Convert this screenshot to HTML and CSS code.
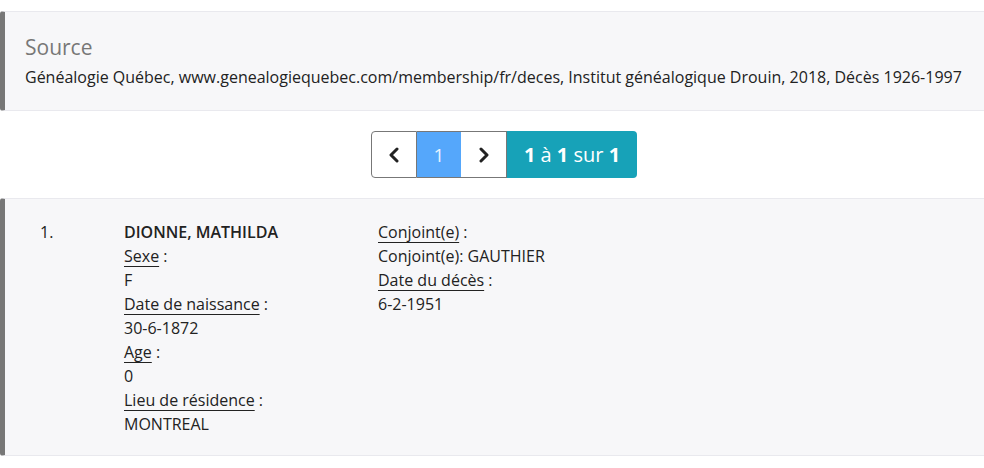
FILE: index.html
```html
<!DOCTYPE html>
<html lang="fr">
<head>
<meta charset="utf-8">
<title>Source</title>
<link rel="stylesheet" href="styles.css">
</head>
<body>
<section class="source">
  <h4 class="source-title">Source</h4>
  <p class="source-text">Généalogie Québec, www.genealogiequebec.com/membership/fr/deces, Institut généalogique Drouin, 2018, Décès 1926-1997</p>
</section>

<nav class="pager-wrap">
  <div class="pager">
    <a class="pg-btn pg-arrow" href="#" aria-label="Précédent">
      <svg width="14" height="16" viewBox="0 0 14 16"><path d="M10 2 L4 8 L10 14" fill="none" stroke="#222" stroke-width="3" stroke-linecap="round" stroke-linejoin="round"/></svg>
    </a>
    <span class="pg-btn pg-current">1</span>
    <a class="pg-btn pg-arrow pg-next" href="#" aria-label="Suivant">
      <svg width="14" height="16" viewBox="0 0 14 16"><path d="M4 2 L10 8 L4 14" fill="none" stroke="#222" stroke-width="3" stroke-linecap="round" stroke-linejoin="round"/></svg>
    </a>
    <span class="pg-info"><b>1</b>&nbsp;à&nbsp;<b>1</b>&nbsp;sur&nbsp;<b>1</b></span>
  </div>
</nav>

<section class="record">
  <div class="rec-num">1.</div>
  <div class="rec-col">
    <div class="rec-name">DIONNE, MATHILDA</div>
    <div><span class="lbl">Sexe</span> :</div>
    <div>F</div>
    <div><span class="lbl">Date de naissance</span> :</div>
    <div>30-6-1872</div>
    <div><span class="lbl">Age</span> :</div>
    <div>0</div>
    <div><span class="lbl">Lieu de résidence</span> :</div>
    <div>MONTREAL</div>
  </div>
  <div class="rec-col">
    <div><span class="lbl">Conjoint(e)</span> :</div>
    <div>Conjoint(e): GAUTHIER</div>
    <div><span class="lbl">Date du décès</span> :</div>
    <div>6-2-1951</div>
  </div>
</section>
</body>
</html>
```

FILE: styles.css
```css
html, body {
  margin: 0;
  padding: 0;
  background: #fff;
}
body {
  font-family: "Open Sans", "Liberation Sans", sans-serif;
  font-size: 16px;
  line-height: 24px;
  color: #222;
}
.source {
  margin-top: 11px;
  background: #f7f7f9;
  border-top: 1px solid #e9e9ee;
  border-bottom: 1px solid #e9e9ee;
  border-left: 5px solid #777;
  border-radius: 3px 0 0 3px;
  padding: 23px 20px 21px 20px;
}
.source-title {
  margin: 0 0 6px 0;
  font-size: 21px;
  font-weight: 400;
  line-height: 24px;
  color: #777;
}
.source-text {
  margin: 0;
}
.pager-wrap {
  display: flex;
  justify-content: center;
  padding-left: 24px;
  margin-top: 20px;
}
.pager {
  display: flex;
  height: 47px;
}
.pg-btn {
  display: flex;
  align-items: center;
  justify-content: center;
  box-sizing: border-box;
  height: 47px;
  text-decoration: none;
}
.pg-arrow {
  width: 46px;
  background: #fff;
  border: 1px solid #777;
}
.pg-arrow:first-child {
  border-radius: 4px 0 0 4px;
}
.pg-next {
  border-left: none;
}
.pg-current {
  width: 44px;
  background: #55a7fb;
  color: #e8f3ff;
  font-size: 19px;
  border-top: 1px solid #777;
  border-bottom: 1px solid #777;
}
.pg-info {
  display: flex;
  align-items: center;
  justify-content: center;
  width: 130px;
  height: 47px;
  background: #17a2b8;
  color: #fff;
  font-size: 20px;
  border-radius: 0 4px 4px 0;
}
.pg-info b {
  font-weight: 700;
}
.record {
  margin-top: 20px;
  background: #f7f7f9;
  border-top: 1px solid #e9e9ee;
  border-bottom: 1px solid #e9e9ee;
  border-left: 5px solid #777;
  border-radius: 3px 0 0 3px;
  padding: 21px 0 19px 35px;
  display: grid;
  grid-template-columns: 84px 254px 1fr;
}
.rec-name {
  font-weight: 600;
}
.lbl {
  text-decoration: underline;
  text-underline-offset: 4px;
  text-decoration-thickness: 1px;
}
```
